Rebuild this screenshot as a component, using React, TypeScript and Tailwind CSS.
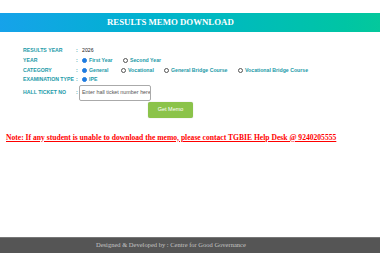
import React from "react";

const Radio = ({ checked }: { checked?: boolean }) => (
  <span
    className={`inline-block w-[5px] h-[5px] rounded-full mr-[2px] shrink-0 ${
      checked ? "bg-[#1e7be0] border-[0.5px] border-[#1e7be0]" : "border-[0.6px] border-[#555] bg-white"
    }`}
  />
);

const Label = ({ children }: { children: React.ReactNode }) => (
  <div className="w-[53px] shrink-0 whitespace-nowrap">{children}</div>
);

export default function App() {
  const sans = { fontFamily: "'Liberation Sans', Arial, sans-serif" };
  const serif = { fontFamily: "'Liberation Serif', serif" };
  return (
    <div className="w-[380px] h-[253px] bg-white flex flex-col relative overflow-hidden">
      <div className="h-[13px] shrink-0" />
      <div className="h-[19px] shrink-0 bg-gradient-to-r from-[#16a2ea] to-[#04c89c] flex items-center pl-[107px]">
        <span className="text-white font-bold text-[8.8px] leading-none" style={serif}>
          RESULTS MEMO DOWNLOAD
        </span>
      </div>
      <div className="pl-[23px] pt-[14px] text-[5.2px] leading-none text-[#1b9aa8] font-bold flex flex-col" style={sans}>
        <div className="flex items-center h-[10px]">
          <Label>RESULTS YEAR</Label>
          <span className="w-[6px]">:</span>
          <span className="text-[#222] font-normal">2026</span>
        </div>
        <div className="flex items-center h-[9.5px]">
          <Label>YEAR</Label>
          <span className="w-[6px]">:</span>
          <Radio checked />
          <span className="w-[34px]">First Year</span>
          <Radio />
          <span>Second Year</span>
        </div>
        <div className="flex items-center h-[9.5px]">
          <Label>CATEGORY</Label>
          <span className="w-[6px]">:</span>
          <Radio checked />
          <span className="w-[32px]">General</span>
          <Radio />
          <span className="w-[36px]">Vocational</span>
          <Radio />
          <span className="w-[67px] whitespace-nowrap">General Bridge Course</span>
          <Radio />
          <span className="whitespace-nowrap">Vocational Bridge Course</span>
        </div>
        <div className="flex items-center h-[9.5px]">
          <Label>EXAMINATION TYPE</Label>
          <span className="w-[6px]">:</span>
          <Radio checked />
          <span>IPE</span>
        </div>
        <div className="flex items-center h-[16px]">
          <Label>HALL TICKET NO</Label>
          <span className="w-[3px]">:</span>
          <div className="w-[72px] h-[16px] border border-[#aaa] rounded-[2px] flex items-center pl-[2px] text-[5.4px] text-[#555] font-normal whitespace-nowrap overflow-hidden">
            Enter hall ticket number here
          </div>
        </div>
        <div className="flex mt-[1px]">
          <div className="ml-[125px] w-[45px] h-[16px] bg-[#8bc34a] rounded-[2px] text-white text-[5.5px] font-normal flex items-center justify-center shadow-[0_0_1px_rgba(0,0,0,0.3)]">
            Get Memo
          </div>
        </div>
      </div>
      <div className="pl-[6px] mt-[15px] text-[7.6px] leading-[10px] font-bold text-[#ff0000] underline whitespace-nowrap" style={serif}>
        Note: If any student is unable to download the memo, please contact TGBIE Help Desk @ 9240205555
      </div>
      <div className="flex-1" />
      <div className="h-[16px] shrink-0 bg-[#555555] border-t border-[#777] flex items-center pl-[96px]">
        <span className="text-[#c4c4c4] text-[6.5px] leading-none" style={serif}>
          Designed &amp; Developed by : Centre for Good Governance
        </span>
      </div>
    </div>
  );
}
